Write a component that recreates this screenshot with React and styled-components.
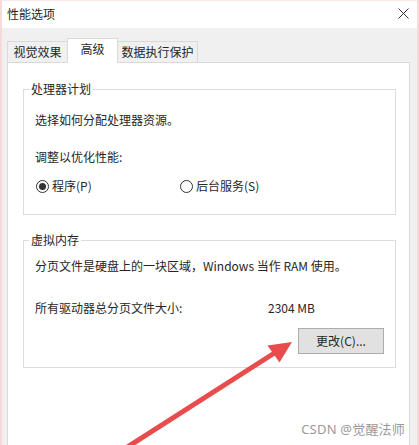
import React from "react";
import styled, { createGlobalStyle } from "styled-components";

const Global = createGlobalStyle`
  html, body { margin: 0; padding: 0; }
  body {
    width: 419px;
    height: 445px;
    overflow: hidden;
    background: #ffffff;
    font-family: "Noto Sans CJK SC", "Microsoft YaHei", "Noto Sans", sans-serif;
    font-size: 12px;
    color: #262626;
  }
`;

const Window = styled.div`
  position: relative;
  box-sizing: border-box;
  width: 419px;
  height: 445px;
  border-left: 2px solid #f6dada;
  border-right: 2px solid #f6dada;
  border-top: 1px solid #fbe6e6;
  display: flex;
  flex-direction: column;
  overflow: hidden;
`;

const TitleBar = styled.div`
  height: 27px;
  flex: none;
  background: #ffffff;
  display: flex;
  align-items: center;
  justify-content: space-between;
  padding: 0 8px 2px 5px;
  box-sizing: border-box;
`;

const Title = styled.span`
  font-size: 12px;
  line-height: 16px;
  color: #262626;
`;

const CloseIcon = styled.svg`
  width: 11px;
  height: 11px;
  display: block;
`;

const Body = styled.div`
  flex: 1;
  background: #f0f0f0;
  display: flex;
  flex-direction: column;
  padding: 10px 7px 0 5px;
`;

const TabRow = styled.div`
  display: flex;
  align-items: flex-end;
  height: 25px;
  position: relative;
  z-index: 1;
  margin-bottom: -1px;
`;

const Tab = styled.div`
  box-sizing: border-box;
  width: ${(p) => p.$w}px;
  height: ${(p) => (p.$active ? 25 : 22)}px;
  display: flex;
  align-items: center;
  justify-content: center;
  background: ${(p) => (p.$active ? "#ffffff" : "#f0f0f0")};
  border: 1px solid #d9d9d9;
  border-bottom: ${(p) => (p.$active ? "1px solid #ffffff" : "1px solid #d9d9d9")};
  margin-left: ${(p) => (p.$first ? 0 : -1)}px;
  font-size: 12px;
  line-height: 16px;
  color: #262626;
  padding-bottom: ${(p) => (p.$active ? 3 : 0)}px;
`;

const Panel = styled.div`
  flex: 1;
  background: #ffffff;
  border: 1px solid #d9d9d9;
  border-bottom: none;
  padding: 18px 13px 0 15px;
  display: flex;
  flex-direction: column;
`;

const Group = styled.fieldset`
  margin: ${(p) => p.$top}px 0 0 0;
  border: 1px solid #dcdcdc;
  padding: ${(p) => p.$pt}px 11px ${(p) => p.$pb}px 11px;
  min-width: 0;
  display: flex;
  flex-direction: column;
`;

const Legend = styled.legend`
  padding: 0 2px;
  margin-left: -6px;
  font-size: 12px;
  line-height: 16px;
  color: #262626;
`;

const Line = styled.div`
  font-size: 12px;
  line-height: 16px;
  margin-top: ${(p) => p.$mt || 0}px;
  color: #262626;
  white-space: nowrap;
`;

const RadioRow = styled.div`
  display: grid;
  grid-template-columns: 144px auto;
  margin-top: ${(p) => p.$mt || 0}px;
  margin-left: 1px;
`;

const RadioItem = styled.label`
  display: flex;
  align-items: center;
  gap: 3px;
  font-size: 12px;
  line-height: 16px;
  white-space: nowrap;
`;

const RadioCircle = styled.span`
  box-sizing: border-box;
  width: 13px;
  height: 13px;
  border-radius: 50%;
  border: 1px solid #333333;
  background: #ffffff;
  display: flex;
  align-items: center;
  justify-content: center;
  &::after {
    content: "";
    width: 7px;
    height: 7px;
    border-radius: 50%;
    background: ${(p) => (p.$checked ? "#333333" : "transparent")};
  }
`;

const InfoRow = styled.div`
  display: grid;
  grid-template-columns: 233px auto;
  margin-top: ${(p) => p.$mt || 0}px;
  font-size: 12px;
  line-height: 16px;
  white-space: nowrap;
`;

const ButtonRow = styled.div`
  display: flex;
  justify-content: flex-end;
  margin-top: ${(p) => p.$mt || 0}px;
`;

const Button = styled.button`
  box-sizing: border-box;
  width: 86px;
  height: 26px;
  background: #e1e1e1;
  border: 1px solid #adadad;
  font-family: inherit;
  font-size: 12px;
  line-height: 16px;
  color: #262626;
  padding: 0;
`;

const ArrowOverlay = styled.svg`
  position: absolute;
  left: 0;
  top: 0;
  width: 419px;
  height: 445px;
  pointer-events: none;
`;

const Watermark = styled.div`
  position: absolute;
  right: 12px;
  bottom: 8px;
  font-size: 13px;
  line-height: 16px;
  color: #9a9a9a;
  font-family: "Noto Sans", "Noto Sans CJK SC", sans-serif;
  letter-spacing: 0.2px;
`;

export default function App() {
  return (
    <>
      <Global />
      <Window>
        <TitleBar>
          <Title>性能选项</Title>
          <CloseIcon viewBox="0 0 11 11">
            <path d="M0.5 0.5 L10.5 10.5 M10.5 0.5 L0.5 10.5" stroke="#333" strokeWidth="1" fill="none" />
          </CloseIcon>
        </TitleBar>
        <Body>
          <TabRow>
            <Tab $w={61} $first>视觉效果</Tab>
            <Tab $w={51} $active>高级</Tab>
            <Tab $w={81}>数据执行保护</Tab>
          </TabRow>
          <Panel>
            <Group $top={0} $pt={15} $pb={20}>
              <Legend>处理器计划</Legend>
              <Line>选择如何分配处理器资源。</Line>
              <Line $mt={21}>调整以优化性能:</Line>
              <RadioRow $mt={13}>
                <RadioItem>
                  <RadioCircle $checked />
                  程序(P)
                </RadioItem>
                <RadioItem>
                  <RadioCircle />
                  后台服务(S)
                </RadioItem>
              </RadioRow>
            </Group>
            <Group $top={17} $pt={10} $pb={13}>
              <Legend>虚拟内存</Legend>
              <Line>分页文件是硬盘上的一块区域，Windows 当作 RAM 使用。</Line>
              <InfoRow $mt={26}>
                <span>所有驱动器总分页文件大小:</span>
                <span>2304 MB</span>
              </InfoRow>
              <ButtonRow $mt={12}>
                <Button>更改(C)...</Button>
              </ButtonRow>
            </Group>
          </Panel>
        </Body>
        <ArrowOverlay viewBox="0 0 419 445">
          <line x1="116" y1="452" x2="274" y2="351" stroke="#e84c4c" strokeWidth="5" strokeLinecap="butt" />
          <polygon points="290,341 265.5,344.5 277.5,361.5" fill="#e84c4c" />
        </ArrowOverlay>
        <Watermark>CSDN @觉醒法师</Watermark>
      </Window>
    </>
  );
}
